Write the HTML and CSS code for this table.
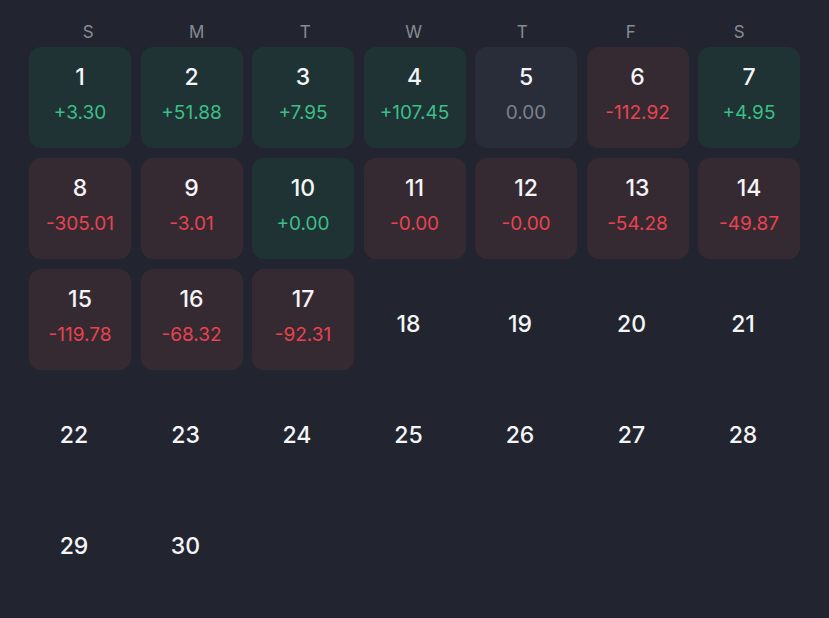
FILE: index.html
```html
<!DOCTYPE html>
<html>
<head>
<meta charset="utf-8">
<link rel="stylesheet" href="styles.css">
</head>
<body>
<div class="cal">
  <div class="weekdays">
    <div>S</div><div>M</div><div>T</div><div>W</div><div>T</div><div>F</div><div>S</div>
  </div>
  <div class="grid">
    <div class="cell up"><span class="day">1</span><span class="val">+3.30</span></div>
    <div class="cell up"><span class="day">2</span><span class="val">+51.88</span></div>
    <div class="cell up"><span class="day">3</span><span class="val">+7.95</span></div>
    <div class="cell up"><span class="day">4</span><span class="val">+107.45</span></div>
    <div class="cell flat"><span class="day">5</span><span class="val">0.00</span></div>
    <div class="cell down"><span class="day">6</span><span class="val">-112.92</span></div>
    <div class="cell up"><span class="day">7</span><span class="val">+4.95</span></div>

    <div class="cell down"><span class="day">8</span><span class="val">-305.01</span></div>
    <div class="cell down"><span class="day">9</span><span class="val">-3.01</span></div>
    <div class="cell up"><span class="day">10</span><span class="val">+0.00</span></div>
    <div class="cell down"><span class="day">11</span><span class="val">-0.00</span></div>
    <div class="cell down"><span class="day">12</span><span class="val">-0.00</span></div>
    <div class="cell down"><span class="day">13</span><span class="val">-54.28</span></div>
    <div class="cell down"><span class="day">14</span><span class="val">-49.87</span></div>

    <div class="cell down"><span class="day">15</span><span class="val">-119.78</span></div>
    <div class="cell down"><span class="day">16</span><span class="val">-68.32</span></div>
    <div class="cell down"><span class="day">17</span><span class="val">-92.31</span></div>
    <div class="cell empty"><span class="day">18</span></div>
    <div class="cell empty"><span class="day">19</span></div>
    <div class="cell empty"><span class="day">20</span></div>
    <div class="cell empty"><span class="day">21</span></div>

    <div class="cell empty"><span class="day">22</span></div>
    <div class="cell empty"><span class="day">23</span></div>
    <div class="cell empty"><span class="day">24</span></div>
    <div class="cell empty"><span class="day">25</span></div>
    <div class="cell empty"><span class="day">26</span></div>
    <div class="cell empty"><span class="day">27</span></div>
    <div class="cell empty"><span class="day">28</span></div>

    <div class="cell empty"><span class="day">29</span></div>
    <div class="cell empty"><span class="day">30</span></div>
  </div>
</div>
</body>
</html>
```
FILE: styles.css
```css
html, body {
  margin: 0;
  padding: 0;
  background: #22252f;
  height: 100%;
}
body {
  font-family: Inter, "Noto Sans", sans-serif;
  color: #ffffff;
  overflow: hidden;
}
.cal {
  padding-top: 22px;
}
.weekdays {
  display: grid;
  grid-template-columns: repeat(7, 108.5px);
  margin-left: 34px;
  height: 20px;
  line-height: 20px;
  font-size: 17px;
  color: #868b95;
  text-align: center;
  margin-bottom: 4.5px;
}
.grid {
  display: grid;
  grid-template-columns: repeat(7, 102px);
  grid-auto-rows: 101px;
  column-gap: 9.5px;
  row-gap: 10px;
  margin-left: 29px;
}
.cell {
  border-radius: 12px;
  display: flex;
  flex-direction: column;
  align-items: center;
  padding-top: 17px;
  box-sizing: border-box;
}
.day {
  font-size: 23px;
  line-height: 26px;
  font-weight: 500;
  color: #f4f5f7;
}
.val {
  font-size: 19px;
  line-height: 22px;
  margin-top: 12px;
}
.up { background: #1f3234; }
.up .val { color: #3cbf86; }
.down { background: #362a32; }
.down .val { color: #e8434f; }
.flat { background: #282d39; }
.flat .val { color: #7c818a; }
.empty {
  background: transparent;
  padding-top: 42.5px;
  padding-right: 12px;
}
```
